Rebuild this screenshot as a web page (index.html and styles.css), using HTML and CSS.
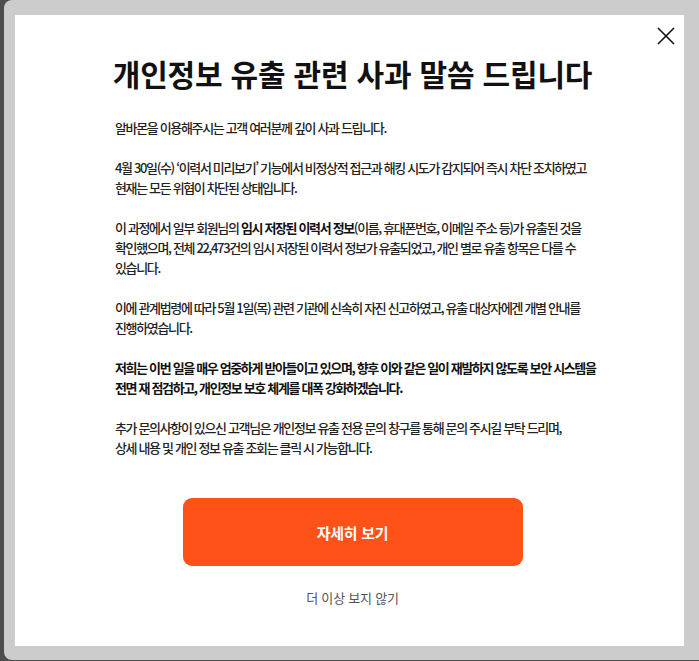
FILE: index.html
```html
<!DOCTYPE html>
<html lang="ko">
<head>
  <meta charset="UTF-8" />
  <meta name="viewport" content="width=device-width, initial-scale=1" />
  <title>개인정보 유출 관련 사과 말씀 드립니다</title>
  <link rel="stylesheet" href="styles.css">
</head>
<body>

  <div class="frame">
    <div class="modal">
      <button class="close" type="button" aria-label="닫기">
        <svg width="18" height="18" viewBox="0 0 18 18">
          <path d="M1 1 L17 17 M17 1 L1 17" stroke="#111" stroke-width="1.6" fill="none" />
        </svg>
      </button>

      <h2>개인정보 유출 관련 사과 말씀 드립니다</h2>

      <div class="notice">
        <p>알바몬을 이용해주시는 고객 여러분께 깊이 사과 드립니다.</p>
        <p>4월 30일(수) ‘이력서 미리보기’ 기능에서 비정상적 접근과 해킹 시도가 감지되어 즉시 차단 조치하였고<br>현재는 모든 위협이 차단된 상태입니다.</p>
        <p>이 과정에서 일부 회원님의 <b>임시 저장된 이력서 정보</b>(이름, 휴대폰번호, 이메일 주소 등)가 유출된 것을<br>확인했으며, 전체 22,473건의 임시 저장된 이력서 정보가 유출되었고, 개인 별로 유출 항목은 다를 수<br>있습니다.</p>
        <p>이에 관계법령에 따라 5월 1일(목) 관련 기관에 신속히 자진 신고하였고, 유출 대상자에겐 개별 안내를<br>진행하였습니다.</p>
        <p class="strong">저희는 이번 일을 매우 엄중하게 받아들이고 있으며, 향후 이와 같은 일이 재발하지 않도록 보안 시스템을<br>전면 재 점검하고, 개인정보 보호 체계를 대폭 강화하겠습니다.</p>
        <p>추가 문의사항이 있으신 고객님은 개인정보 유출 전용 문의 창구를 통해 문의 주시길 부탁 드리며,<br>상세 내용 및 개인 정보 유출 조회는 클릭 시 가능합니다.</p>
      </div>

      <button class="more" type="button">자세히 보기</button>
      <a class="hide" href="#">더 이상 보지 않기</a>
    </div>
  </div>

</body>
</html>
```

FILE: styles.css
```css
* {
  margin: 0;
  padding: 0;
  box-sizing: border-box;
  font-family: "Noto Sans CJK KR", "Noto Sans", sans-serif;
}
html, body {
  height: 100%;
}
body {
  background-color: #4d4d4d;
  overflow: hidden;
}
.frame {
  margin-left: 4px;
  height: 660px;
  background-color: #cccccc;
  border-radius: 8px 0 0 8px;
  padding: 15px 15px 14px 11px;
}
.modal {
  position: relative;
  width: 669px;
  height: 631px;
  background-color: #fff;
  padding: 38px 94px 0 100px;
  display: flex;
  flex-direction: column;
  align-items: center;
}
.close {
  position: absolute;
  top: 8px;
  right: 5px;
  width: 26px;
  height: 26px;
  border: none;
  background: none;
  display: flex;
  align-items: center;
  justify-content: center;
  cursor: pointer;
}
h2 {
  font-size: 30px;
  line-height: 40px;
  font-weight: 700;
  letter-spacing: -0.2px;
  color: #111;
  text-align: center;
  white-space: nowrap;
  margin-bottom: 25px;
}
.notice {
  align-self: flex-start;
  width: 470px;
  font-size: 13px;
  line-height: 20px;
  font-weight: 500;
  letter-spacing: -1.35px;
  color: #222;
}
.notice p {
  margin-bottom: 20px;
  white-space: nowrap;
}
.notice p:last-child {
  margin-bottom: 0;
}
.notice b, .notice .strong {
  font-weight: 700;
  color: #111;
}
.more {
  margin-top: 40px;
  width: 340px;
  height: 68px;
  border: none;
  border-radius: 9px;
  background-color: #ff5219;
  color: #fff;
  font-size: 15px;
  font-weight: 700;
  letter-spacing: -0.3px;
  cursor: pointer;
}
.hide {
  margin-top: 22px;
  font-size: 13px;
  line-height: 20px;
  letter-spacing: -0.2px;
  color: #555;
  text-decoration: none;
}
```
